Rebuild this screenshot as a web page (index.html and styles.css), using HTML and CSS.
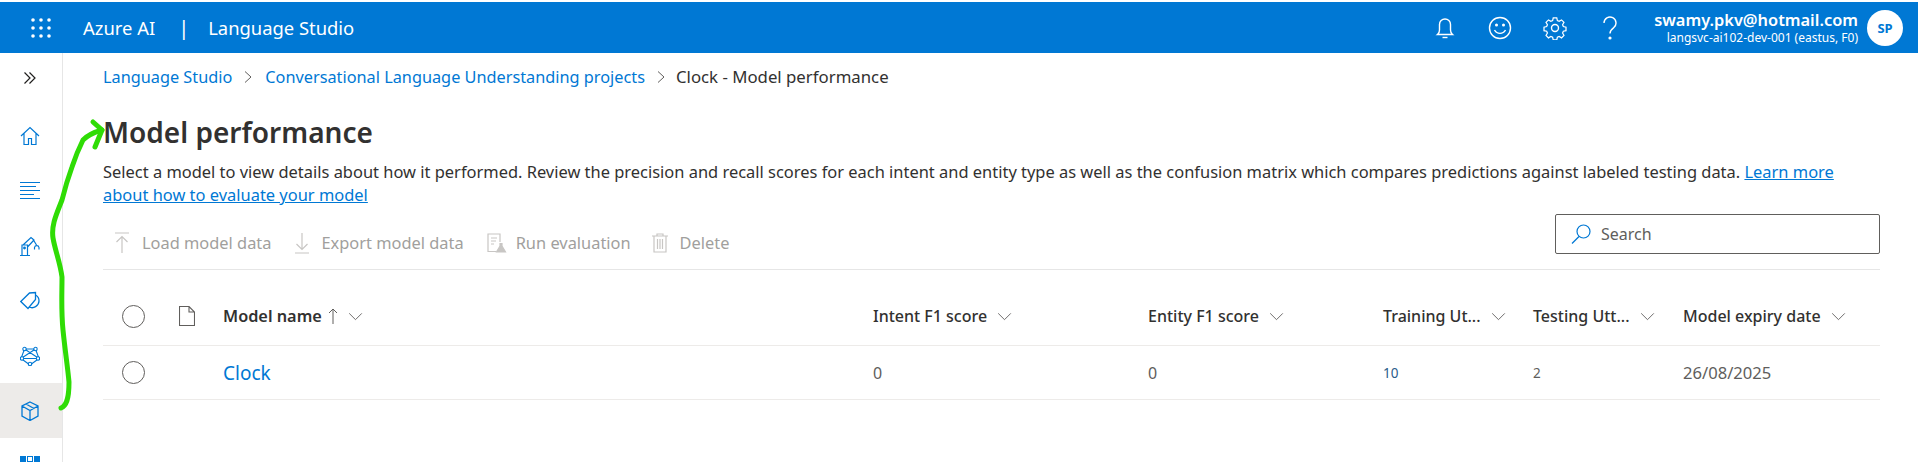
FILE: index.html
```html
<!DOCTYPE html>
<html lang="en">
<head>
    <meta charset="UTF-8">
    <title>Model performance - Language Studio</title>
    <link rel="stylesheet" href="styles.css">
</head>
<body>

<header class="topbar">
    <svg class="waffle" viewBox="0 0 20 20" fill="#fff">
        <circle cx="2" cy="2" r="1.8"/><circle cx="10" cy="2" r="1.8"/><circle cx="18" cy="2" r="1.8"/>
        <circle cx="2" cy="10" r="1.8"/><circle cx="10" cy="10" r="1.8"/><circle cx="18" cy="10" r="1.8"/>
        <circle cx="2" cy="18" r="1.8"/><circle cx="10" cy="18" r="1.8"/><circle cx="18" cy="18" r="1.8"/>
    </svg>
    <span class="brand">Azure AI</span>
    <span class="brand-sep">|</span>
    <span class="brand">Language Studio</span>

    <div class="topbar-right">
        <svg class="top-icon" viewBox="0 0 24 24" fill="none" stroke="#fff" stroke-width="1.4">
            <path d="M4.500 18.500c1.500-1.200 2-2.600 2-4.500V8.500a5.500 5.500 0 0 1 11 0V14c0 1.900.5 3.300 2 4.500z"/>
            <path d="M9.500 21.500h5"/>
        </svg>
        <svg class="top-icon" viewBox="0 0 24 24" fill="none" stroke="#fff" stroke-width="1.4">
            <circle cx="12" cy="12" r="10.500"/>
            <circle cx="8.500" cy="9" r=".8" fill="#fff"/><circle cx="15.500" cy="9" r=".8" fill="#fff"/>
            <path d="M6.500 14c2.500 4.500 8.500 4.500 11 0"/>
        </svg>
        <svg class="top-icon" viewBox="0 0 24 24" fill="none" stroke="#fff" stroke-width="1.400">
            <circle cx="12" cy="12" r="3.500"/>
            <path d="M10 1.500h4l.7 3 2 .9 2.700-1.600 2.800 2.800-1.600 2.700.9 2 3 .7v4l-3 .7-.9 2 1.600 2.700-2.800 2.800-2.700-1.600-2 .9-.7 3h-4l-.7-3-2-.9-2.700 1.600-2.800-2.800 1.600-2.700-.9-2-3-.7v-4l3-.7.9-2-1.600-2.700 2.800-2.800 2.700 1.600 2-.9z" transform="translate(12 12) scale(.88) translate(-12 -13)"/>
        </svg>
        <svg class="top-icon" viewBox="0 0 24 24" fill="none" stroke="#fff" stroke-width="1.400">
            <path d="M6 7a6 6 0 1 1 9.500 4.900c-2.200 1.600-3.500 2.600-3.500 5.600"/>
            <circle cx="12" cy="22" r=".9" fill="#fff"/>
        </svg>
        <div class="account">
            <div class="account-mail">swamy.pkv@hotmail.com</div>
            <div class="account-res">langsvc-ai102-dev-001 (eastus, F0)</div>
        </div>
        <div class="avatar">SP</div>
    </div>
</header>

<div class="layout">
    <nav class="sidebar">
        <div class="side-toggle">
            <svg class="side-small" viewBox="0 0 14 14" fill="none" stroke="#201f1e" stroke-width="1.200">
                <path d="M1.500 1.500 7 7l-5.500 5.500M6.500 1.500 12 7l-5.500 5.500"/>
            </svg>
        </div>
        <div class="side-item">
            <svg class="side-icon" viewBox="0 0 20 20" fill="none" stroke="#0078d4" stroke-width="1.200">
                <path d="M1 10 10 1.500 19 10M4 7.500v11h4.500v-6h3v6H16v-11"/>
            </svg>
        </div>
        <div class="side-item">
            <svg class="side-icon side-lines" viewBox="0 0 20 18" fill="none" stroke="#0078d4" stroke-width="1">
                <path d="M0 .5h20M0 4.500h16M0 8.500h20M0 12.500h14M0 16.500h20"/>
            </svg>
        </div>
        <div class="side-item">
            <svg class="side-icon" viewBox="0 0 20 20" fill="none" stroke="#0078d4" stroke-width="1.200">
                <path d="M0 19.500h10M2 19.500V9h5.500v10.500M3 9l8-7.500 3 2.500-6.500 7M12.500 2.500 16.500 9"/>
                <path d="M14.500 13.500v-2a2.300 2.300 0 0 1 4.500 0v2"/>
                <circle cx="4.500" cy="12" r=".8" fill="#0078d4"/>
            </svg>
        </div>
        <div class="side-item">
            <svg class="side-icon" viewBox="0 0 20 20" fill="none" stroke="#0078d4" stroke-width="1.300">
                <path d="M.8 10.500 9.500 2l6-.5v7l-7.500 9z"/>
                <path d="M15.500 4a6.500 6.500 0 0 1 3.500 6 7 7 0 0 1-10 6"/>
            </svg>
        </div>
        <div class="side-item">
            <svg class="side-icon" viewBox="0 0 20 20" fill="none" stroke="#0078d4" stroke-width="1.100">
                <path d="M4.500 3h11l3.500 9.500-9 6.500-9-6.500zM4.500 3 19 12.500M15.500 3 1 12.500M1 12.500h18"/>
                <circle cx="4.500" cy="3" r="1.700" fill="#fff"/><circle cx="15.500" cy="3" r="1.700" fill="#fff"/>
                <circle cx="2" cy="12.500" r="1.700" fill="#fff"/><circle cx="18" cy="12.500" r="1.700" fill="#fff"/>
                <circle cx="10" cy="18" r="1.700" fill="#fff"/>
            </svg>
        </div>
        <div class="side-item side-item-active">
            <svg class="side-icon" viewBox="0 0 20 20" fill="none" stroke="#0078d4" stroke-width="1.300">
                <path d="M10 1 18 5v10l-8 4.500L2 15V5zM2 5l8 4.500L18 5M10 9.500v10M6 3l8 4.500"/>
            </svg>
        </div>
        <div class="side-item side-item-last">
            <div class="side-squares"><i></i><i class="hollow"></i><i></i></div>
        </div>
    </nav>

    <main class="content">
        <div class="breadcrumb">
            <a href="#">Language Studio</a>
            <svg class="crumb-sep" viewBox="0 0 10 14" fill="none" stroke="#605e5c"><path d="M2 1.500 8 7l-6 5.500"/></svg>
            <a href="#">Conversational Language Understanding projects</a>
            <svg class="crumb-sep" viewBox="0 0 10 14" fill="none" stroke="#605e5c"><path d="M2 1.500 8 7l-6 5.500"/></svg>
            <span class="crumb-current">Clock - Model performance</span>
        </div>

        <h1>Model performance</h1>
        <p class="intro">Select a model to view details about how it performed. Review the precision and recall scores for each intent and entity type as well as the confusion matrix which compares predictions against labeled testing data. <a href="#">Learn more about how to evaluate your model</a></p>

        <div class="toolbar">
            <div class="tool tool-load">
                <svg class="tool-icon" viewBox="0 0 16 22" fill="none" stroke="#c8c6c4" stroke-width="1.200"><path d="M1 1h14M8 21V5M2.500 10 8 4.500l5.500 5.500"/></svg>
                Load model data
            </div>
            <div class="tool tool-export">
                <svg class="tool-icon" viewBox="0 0 16 22" fill="none" stroke="#c8c6c4" stroke-width="1.200"><path d="M1 21h14M8 1v16M2.500 12 8 17.500l5.500-5.500"/></svg>
                Export model data
            </div>
            <div class="tool tool-run">
                <svg class="tool-icon tool-icon-run" viewBox="0 0 20 20" fill="none" stroke="#c8c6c4" stroke-width="1.200"><path d="M9 18.500H1V1h12v8M4 5h6M4 8h5M4 11h3"/><path d="M13 10v3l-3.500 6h9L15 13v-3" fill="#c8c6c4"/></svg>
                Run evaluation
            </div>
            <div class="tool">
                <svg class="tool-icon" viewBox="0 0 16 20" fill="none" stroke="#c8c6c4" stroke-width="1.200"><path d="M0 3h16M5 3V1h6v2M2 3v16h12V3M5.500 6v10M8 6v10M10.500 6v10"/></svg>
                Delete
            </div>
            <div class="search">
                <svg class="search-icon" viewBox="0 0 20 20" fill="none" stroke="#0078d4" stroke-width="1.200"><circle cx="12.500" cy="7.500" r="6.500"/><path d="M8 12.500 1 19.500"/></svg>
                Search
            </div>
        </div>

        <div class="grid-row head-row">
            <div class="first-cell">
                <span class="radio"></span>
                <svg class="doc-icon" viewBox="0 0 16 20" fill="none" stroke="#605e5c" stroke-width="1.100"><path d="M.5.500h9.500l5.500 5.500v13.500H.5zM10 .5V6h5.500"/></svg>
            </div>
            <div class="col-head col-name">Model name
                <svg class="sort-arrow" viewBox="0 0 10 16" fill="none" stroke="#605e5c"><path d="M5 16V1M1 5l4-4 4 4"/></svg>
                <svg class="chev" viewBox="0 0 16 10" fill="none" stroke="#605e5c"><path d="M1 1.500 8 8.500l7-7"/></svg>
            </div>
            <div class="col-head">Intent F1 score<svg class="chev" viewBox="0 0 16 10" fill="none" stroke="#605e5c"><path d="M1 1.500 8 8.500l7-7"/></svg></div>
            <div class="col-head">Entity F1 score<svg class="chev" viewBox="0 0 16 10" fill="none" stroke="#605e5c"><path d="M1 1.500 8 8.500l7-7"/></svg></div>
            <div class="col-head">Training Ut...<svg class="chev" viewBox="0 0 16 10" fill="none" stroke="#605e5c"><path d="M1 1.500 8 8.500l7-7"/></svg></div>
            <div class="col-head">Testing Utt...<svg class="chev" viewBox="0 0 16 10" fill="none" stroke="#605e5c"><path d="M1 1.500 8 8.500l7-7"/></svg></div>
            <div class="col-head">Model expiry date<svg class="chev" viewBox="0 0 16 10" fill="none" stroke="#605e5c"><path d="M1 1.500 8 8.500l7-7"/></svg></div>
        </div>
        <div class="grid-row body-row">
            <div class="first-cell"><span class="radio"></span></div>
            <div><a class="model-link" href="#">Clock</a></div>
            <div class="cell">0</div>
            <div class="cell">0</div>
            <div class="cell cell-small cell-blue">10</div>
            <div class="cell cell-small">2</div>
            <div class="cell cell-date">26/08/2025</div>
        </div>
    </main>
</div>

<!-- marker drawn over the screenshot -->
<svg class="marker" viewBox="0 0 110 420" fill="none" stroke="#2fdc05" stroke-width="5" stroke-linecap="round" stroke-linejoin="round">
    <path d="M61 408C66 406 69 400 69 382C68 370 65 350 63 330C61 310 62 295 62 277C60 262 55 250 53 238C51 225 57 213 62 200C65 188 68 178 72 167C76 155 79 148 83 140C88 135 95 132 102 130"/>
    <path d="M93 122l9 8-7 17"/>
</svg>

</body>
</html>
```

FILE: styles.css
```css
* {
    box-sizing: border-box;
}
html, body {
    height: 462px;
    overflow: hidden;
}
body {
    margin: 0;
    padding-top: 2px;
    background-color: #fff;
    font-family: "Noto Sans", "Open Sans", sans-serif;
    font-size: 16px;
    color: #323130;
    position: relative;
}
a {
    color: #0078d4;
    text-decoration: none;
}

/* Barra superior */
.topbar {
    height: 51px;
    background-color: #0078d4;
    color: #fff;
    display: flex;
    align-items: center;
    padding-left: 31px;
}
.waffle {
    width: 20px;
    height: 20px;
    margin-right: 32px;
}
.brand {
    font-size: 18.400px;
}
.brand-sep {
    font-size: 20px;
    margin: 0 19px 0 23px;
}
.topbar-right {
    margin-left: auto;
    display: flex;
    align-items: center;
    padding-right: 15px;
}
.top-icon {
    width: 24px;
    height: 24px;
    margin-right: 31px;
}
.account {
    text-align: right;
    margin-left: 1px;
    margin-right: 9px;
    line-height: 1;
}
.account-mail {
    font-size: 16.400px;
    font-weight: 600;
    line-height: 20px;
}
.account-res {
    font-size: 12px;
    line-height: 16px;
}
.avatar {
    width: 36px;
    height: 36px;
    border-radius: 50%;
    background-color: #fff;
    color: #0078d4;
    font-size: 13px;
    font-weight: 700;
    display: flex;
    align-items: center;
    justify-content: center;
}

/* Menu lateral */
.layout {
    display: flex;
    height: 409px;
}
.sidebar {
    width: 63px;
    flex-shrink: 0;
    border-right: 1px solid #e6e6e6;
    overflow: hidden;
}
.side-toggle {
    height: 55px;
    display: flex;
    align-items: center;
    justify-content: center;
    padding: 0 3px 6px 0;
}
.side-small {
    width: 14px;
    height: 14px;
}
.side-item {
    height: 55px;
    display: flex;
    align-items: center;
    justify-content: center;
    padding-right: 3px;
}
.side-item-active {
    background-color: #edebe9;
}
.side-item-last {
    height: 24px;
    align-items: flex-start;
    padding-top: 18px;
}
.side-icon {
    width: 20px;
    height: 20px;
}
.side-lines {
    height: 18px;
}
.side-squares {
    display: flex;
    gap: 1px;
}
.side-squares i {
    width: 6px;
    height: 6px;
    background-color: #0078d4;
}
.side-squares .hollow {
    background-color: #fff;
    border: 1px solid #0078d4;
}

/* Contenido */
.content {
    flex: 1;
    padding: 0 38px 0 40px;
}
.breadcrumb {
    height: 47px;
    display: flex;
    align-items: center;
    font-size: 16.300px;
}
.crumb-sep {
    width: 10px;
    height: 14px;
    margin: 0 10px 0 11px;
}
.crumb-sep:first-of-type {
    margin-right: 12px;
}
.crumb-current {
    font-size: 16.800px;
}
h1 {
    margin: 11px 0 0;
    font-size: 28px;
    line-height: 42px;
    font-weight: 600;
}
.intro {
    margin: 7px 0 0;
    font-size: 16.450px;
    line-height: 23px;
}
.intro a {
    text-decoration: underline;
}
.toolbar {
    height: 64px;
    border-bottom: 1px solid #e6e6e6;
    display: flex;
    align-items: center;
    color: #a19f9d;
    padding-left: 11px;
    font-size: 16.400px;
}
.tool {
    display: flex;
    align-items: center;
    padding-top: 10px;
}
.tool-load {
    margin-right: 22px;
}
.tool-export {
    margin-right: 23px;
}
.tool-run {
    margin-right: 21px;
}
.tool-icon {
    width: 16px;
    height: 22px;
    margin-right: 12px;
}
.tool-icon-run {
    width: 20px;
    margin-right: 9px;
}
.search {
    margin-left: auto;
    width: 325px;
    height: 40px;
    margin-top: -8px;
    border: 1px solid #605e5c;
    border-radius: 2px;
    display: flex;
    align-items: center;
    padding-left: 15px;
    color: #605e5c;
    font-size: 16px;
}
.search-icon {
    width: 20px;
    height: 20px;
    margin-right: 10px;
}

/* Tabla */
.grid-row {
    display: grid;
    grid-template-columns: 120px 650px 275px 235px 150px 150px 1fr;
    align-items: center;
    border-bottom: 1px solid #edebe9;
}
.head-row {
    height: 76px;
    padding-top: 17px;
}
.body-row {
    height: 54px;
}
.first-cell {
    display: flex;
    align-items: center;
    padding-left: 19px;
}
.radio {
    width: 23px;
    height: 23px;
    border: 1.500px solid #605e5c;
    border-radius: 50%;
}
.doc-icon {
    width: 16px;
    height: 20px;
    margin-left: 34px;
}
.col-head {
    display: flex;
    align-items: center;
    font-size: 16px;
    font-weight: 500;
    white-space: nowrap;
}
.col-name {
    font-weight: 600;
    font-size: 16.300px;
}
.sort-arrow {
    width: 10px;
    height: 16px;
    margin-left: 6px;
}
.chev {
    width: 15px;
    height: 9px;
    margin-left: 10px;
}
.model-link {
    font-size: 19px;
}
.cell {
    font-size: 16px;
    color: #605e5c;
}
.cell-small {
    font-size: 13.500px;
}
.cell-blue {
    color: #2b5c8a;
}
.cell-date {
    font-size: 16.600px;
}

/* Marca verde encima de la captura */
.marker {
    position: absolute;
    left: 0;
    top: 0;
    width: 110px;
    height: 420px;
}
```
